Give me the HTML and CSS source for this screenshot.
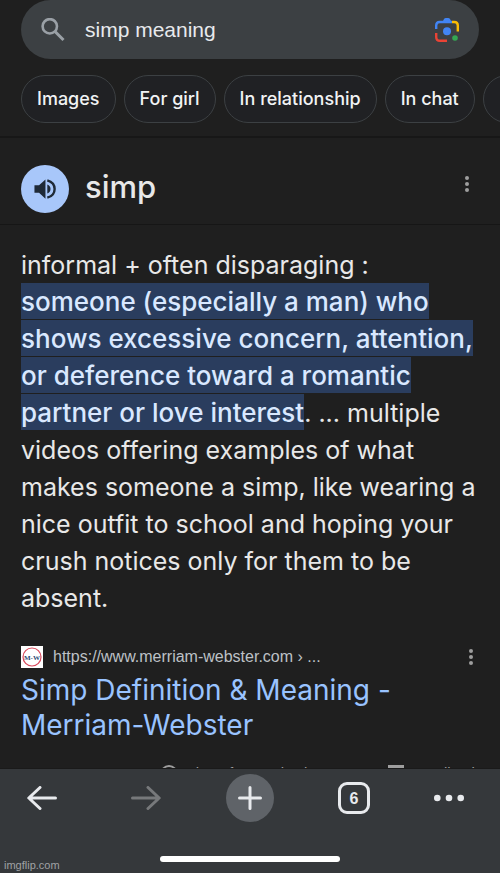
FILE: index.html
```html
<!DOCTYPE html>
<html lang="en">

<head>
  <meta charset="UTF-8">
  <meta name="viewport" content="width=device-width, initial-scale=1.0">
  <title>simp meaning</title>
  <link rel="stylesheet" href="styles.css">
</head>

<body>
  <header class="top">
    <form class="search" role="search">
      <svg class="search-icon" viewBox="0 0 24 24" aria-hidden="true">
        <circle cx="8.8" cy="8.3" r="7.2" fill="none" stroke="currentColor" stroke-width="2.6" />
        <path d="M14 13.5L22.5 22" stroke="currentColor" stroke-width="3" />
      </svg>
      <input class="search-input" type="text" value="simp meaning" aria-label="Search">
      <button class="icon-btn" type="button" aria-label="Search by image">
        <svg class="lens" viewBox="0 0 24 24" fill="none" stroke-width="2.4">
          <path d="M1.2 11V7.5Q1.2 4 4.7 4H17" stroke="#4285f4" />
          <path d="M7 5L9 1Q9.6 0 10.8 0H13.2Q14.4 0 15 1L17 5Z" fill="#4285f4" />
          <path d="M17 4H19.3Q22.8 4 22.8 7.5V13.5" stroke="#fbbc04" />
          <path d="M1.2 15V19Q1.2 22.8 5 22.8H12" stroke="#ea4335" />
          <circle cx="12" cy="13.2" r="4" fill="#4285f4" />
          <circle cx="20" cy="20" r="2.8" fill="#34a853" />
        </svg>
      </button>
    </form>

    <nav class="chips">
      <a class="chip" href="#">Images</a>
      <a class="chip" href="#">For girl</a>
      <a class="chip" href="#">In relationship</a>
      <a class="chip" href="#">In chat</a>
      <a class="chip" href="#" aria-label="More"></a>
    </nav>
  </header>

  <main>
    <section class="word">
      <button class="speak" type="button" aria-label="Listen">
        <svg class="speak-icon" viewBox="0 0 24 24">
          <path d="M0.5 8V16H5.5L12.5 22.5V1.5L5.5 8Z" fill="currentColor" />
          <path d="M14.5 7Q18 8.5 18 12T14.5 17Z" fill="currentColor" />
          <path d="M14.5 2.5C20 4 22.5 7.5 22.5 12S20 20 14.5 21.5" fill="none" stroke="currentColor" stroke-width="2.6" />
        </svg>
      </button>
      <h1 class="word-title">simp</h1>
      <button class="icon-btn word-more" type="button" aria-label="More options">
        <svg class="dots" viewBox="0 0 4 16" fill="currentColor">
          <circle cx="2" cy="2" r="2" />
          <circle cx="2" cy="8" r="2" />
          <circle cx="2" cy="14" r="2" />
        </svg>
      </button>
    </section>

    <article class="snippet">
      <p class="definition">informal + often disparaging :<br>
        <mark>someone (especially a man) who<br>
        shows excessive concern, attention,<br>
        or deference toward a romantic<br>
        partner or love interest</mark>. ... multiple<br>
        videos offering examples of what<br>
        makes someone a simp, like wearing a<br>
        nice outfit to school and hoping your<br>
        crush notices only for them to be<br>
        absent.</p>

      <div class="source">
        <svg class="favicon" viewBox="0 0 22 22" aria-hidden="true">
          <rect width="22" height="22" fill="#fff" />
          <circle cx="11" cy="11" r="9" fill="none" stroke="#d9495c" stroke-width="1.2" />
          <text class="favicon-text" x="11" y="13.5" text-anchor="middle">M-W</text>
        </svg>
        <span class="url">https://www.merriam-webster.com › ...</span>
        <button class="icon-btn" type="button" aria-label="About this result">
          <svg class="dots" viewBox="0 0 4 16" fill="currentColor">
            <circle cx="2" cy="2" r="2" />
            <circle cx="2" cy="8" r="2" />
            <circle cx="2" cy="14" r="2" />
          </svg>
        </button>
      </div>
      <a class="result-link" href="#">Simp Definition &amp; Meaning -<br>Merriam-Webster</a>

      <div class="about">
        <a class="about-link" href="#">
          <svg class="about-icon" viewBox="0 0 18 18" fill="none" stroke="currentColor" stroke-width="2">
            <circle cx="9" cy="9" r="8" />
            <path d="M6.5 7Q6.5 4.5 9 4.5T11.5 7Q11.5 8.5 9 10V11M9 12.5V14.5" />
          </svg>
          About featured snippets
        </a>
        <a class="about-link" href="#">
          <svg class="about-icon" viewBox="0 0 18 18">
            <path d="M1 0H17V14H5L1 18Z" fill="currentColor" />
            <path d="M9 3V8M9 10V12" stroke="#1f1f1f" stroke-width="2" />
          </svg>
          Feedback
        </a>
      </div>
    </article>
  </main>

  <footer class="toolbar">
    <div class="toolbar-buttons">
      <button class="tool" type="button" aria-label="Back">
        <svg class="arrow" viewBox="0 0 30 24">
          <path d="M28.5 12H2M13 1.5L1.8 12L13 22.5" />
        </svg>
      </button>
      <button class="tool" type="button" aria-label="Forward" disabled>
        <svg class="arrow" viewBox="0 0 30 24">
          <path d="M1.5 12H28M17 1.5L28.2 12L17 22.5" />
        </svg>
      </button>
      <button class="tool tool-add" type="button" aria-label="New tab">
        <svg class="plus" viewBox="0 0 24 24">
          <path d="M12 1.5V22.5M1.5 12H22.5" />
        </svg>
      </button>
      <button class="tool" type="button" aria-label="Open tabs"><span class="tab-count">6</span></button>
      <button class="tool tool-menu" type="button" aria-label="Menu">
        <svg class="menu-dots" viewBox="0 0 30 8" fill="currentColor">
          <circle cx="3.3" cy="4" r="3.3" />
          <circle cx="15" cy="4" r="3.3" />
          <circle cx="26.7" cy="4" r="3.3" />
        </svg>
      </button>
    </div>
    <div class="home-bar"></div>
    <span class="watermark">imgflip.com</span>
  </footer>
</body>

</html>
```
FILE: styles.css
```css
* {
  box-sizing: border-box;
}

body {
  display: flex;
  flex-direction: column;
  height: 100vh;
  margin: 0;
  overflow: hidden;
  background-color: #1f1f1f;
  color: #e8e8e8;
  font-family: Inter, 'Open Sans', sans-serif;
}

button {
  padding: 0;
  border: none;
  background: none;
  color: inherit;
  font: inherit;
  cursor: pointer;
}

a {
  color: inherit;
  text-decoration: none;
}

svg {
  display: block;
}

.top {
  flex: none;
  padding-bottom: 13px;
  border-bottom: 2px solid #171717;
}

.search {
  display: flex;
  align-items: center;
  height: 59px;
  margin: 0 21px;
  padding: 0 20px;
  border-radius: 30px;
  background-color: #3c4043;
}

.search-icon {
  width: 24px;
  height: 24px;
  color: #9aa0a6;
}

.search-input {
  flex: 1;
  min-width: 0;
  padding: 0 0 0 20px;
  border: none;
  outline: none;
  background: none;
  color: #e8eaed;
  font-family: 'Liberation Sans', Arial, sans-serif;
  font-size: 21px;
}

.lens {
  width: 24px;
  height: 24px;
}

.chips {
  display: flex;
  gap: 8px;
  margin-top: 16px;
  padding-left: 21px;
  overflow: hidden;
}

.chip {
  flex: none;
  min-width: 80px;
  height: 48px;
  padding: 0 15px;
  border: 1px solid #3c4043;
  border-radius: 24px;
  background-color: #202124;
  color: #f1f3f4;
  font-size: 18px;
  font-weight: 500;
  line-height: 46px;
}

main {
  flex: 1;
  min-height: 0;
  overflow: hidden;
}

.word {
  display: flex;
  align-items: flex-start;
  height: 87px;
  padding: 27px 31px 0 21px;
  border-bottom: 1px solid #161616;
}

.speak {
  display: grid;
  place-items: center;
  width: 48px;
  height: 48px;
  border-radius: 50%;
  background-color: #a8c7fa;
  color: #1f2a37;
}

.speak-icon {
  width: 22px;
  height: 22px;
}

.word-title {
  flex: 1;
  margin: 0 0 0 16px;
  font-size: 31px;
  font-weight: 500;
  line-height: 44px;
}

.word-more {
  margin-top: 11px;
}

.dots {
  width: 4px;
  height: 16px;
  color: #9e9e9e;
}

.snippet {
  padding: 22px 21px 0;
}

.definition {
  margin: 0;
  font-size: 25px;
  line-height: 37px;
  white-space: nowrap;
}

.definition mark {
  padding: 3px 0 2px;
  background-color: #2a3d5e;
  color: #d9e8ff;
  font-size: 26px;
  font-weight: 500;
  line-height: 35px;
}

.source {
  display: flex;
  align-items: center;
  gap: 10px;
  height: 24px;
  margin-top: 28px;
  padding-right: 6px;
}

.favicon {
  width: 22px;
  height: 22px;
}

.favicon-text {
  fill: #2b4a75;
  font-family: 'Liberation Serif', serif;
  font-size: 7px;
  font-weight: bold;
}

.url {
  flex: 1;
  color: #bdc1c6;
  font-family: 'Liberation Sans', Arial, sans-serif;
  font-size: 16px;
}

.result-link {
  display: block;
  margin-top: 4px;
  color: #99c3ff;
  font-size: 28px;
  line-height: 35px;
}

.about {
  display: flex;
  justify-content: flex-end;
  gap: 43px;
  margin-top: 22px;
  color: #9e9e9e;
  font-family: 'Liberation Sans', Arial, sans-serif;
  font-size: 15px;
  line-height: 16px;
}

.about-link {
  display: flex;
  gap: 8px;
}

.about-icon {
  width: 18px;
  height: 18px;
}

.toolbar {
  position: relative;
  flex: none;
  height: 105px;
  border-top: 1px solid #1a1a1a;
  background-color: #35383b;
  color: #e8eaed;
}

.toolbar-buttons {
  display: grid;
  grid-template-columns: repeat(5, 1fr);
  justify-items: center;
  margin: 5px -10px 0;
}

.tool {
  display: grid;
  place-items: center;
  width: 48px;
  height: 48px;
  border-radius: 50%;
}

.tool:disabled {
  color: #77797b;
}

.tool-add {
  background-color: #5f6368;
}

.tool-menu {
  justify-items: start;
}

.arrow,
.plus {
  fill: none;
  stroke: currentColor;
  stroke-width: 3;
  stroke-linecap: round;
  stroke-linejoin: round;
}

.arrow {
  width: 30px;
  height: 24px;
}

.plus {
  width: 24px;
  height: 24px;
}

.tab-count {
  width: 32px;
  height: 32px;
  border: 3px solid #e8eaed;
  border-radius: 9px;
  font-family: 'Liberation Sans', Arial, sans-serif;
  font-size: 16px;
  font-weight: bold;
  line-height: 27px;
}

.menu-dots {
  width: 30px;
  height: 8px;
}

.home-bar {
  width: 36%;
  height: 6px;
  margin: 34px auto 0;
  border-radius: 3px;
  background-color: #fff;
}

/* sits over the toolbar's bottom corner */
.watermark {
  position: absolute;
  bottom: 2px;
  left: 4px;
  color: #a0a2a4;
  font-family: 'Liberation Sans', Arial, sans-serif;
  font-size: 11px;
}
```
